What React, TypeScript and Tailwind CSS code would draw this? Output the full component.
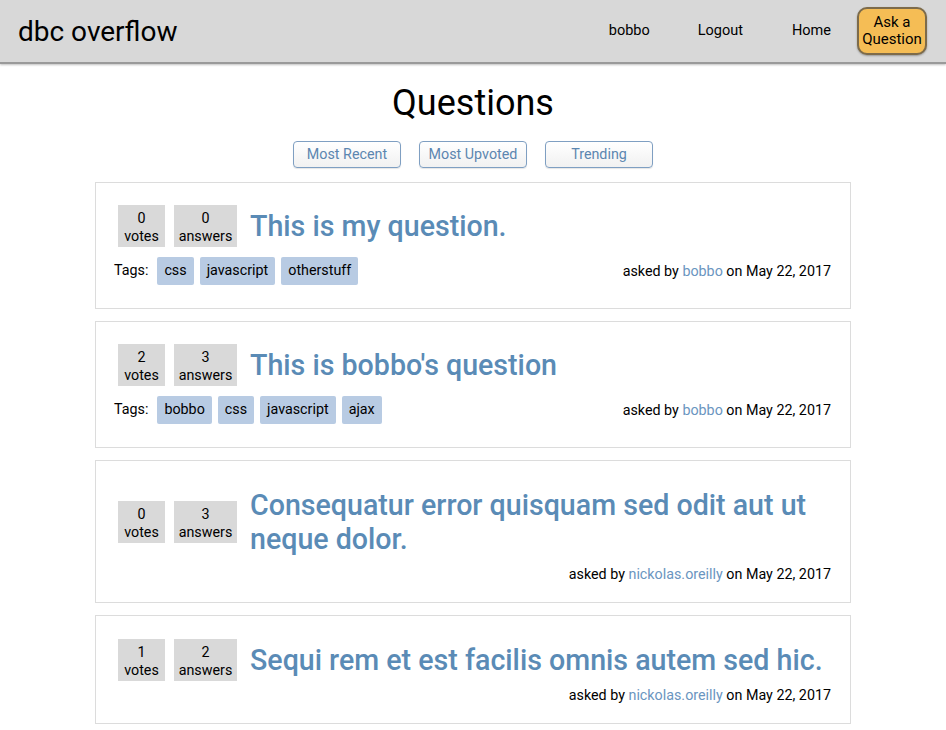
import React from "react";

type Question = {
  votes: number;
  answers: number;
  title: string;
  tags: string[];
  author: string;
  date: string;
};

const questions: Question[] = [
  {
    votes: 0,
    answers: 0,
    title: "This is my question.",
    tags: ["css", "javascript", "otherstuff"],
    author: "bobbo",
    date: "May 22, 2017",
  },
  {
    votes: 2,
    answers: 3,
    title: "This is bobbo's question",
    tags: ["bobbo", "css", "javascript", "ajax"],
    author: "bobbo",
    date: "May 22, 2017",
  },
  {
    votes: 0,
    answers: 3,
    title: "Consequatur error quisquam sed odit aut ut neque dolor.",
    tags: [],
    author: "nickolas.oreilly",
    date: "May 22, 2017",
  },
  {
    votes: 1,
    answers: 2,
    title: "Sequi rem et est facilis omnis autem sed hic.",
    tags: [],
    author: "nickolas.oreilly",
    date: "May 22, 2017",
  },
];

function Header() {
  return (
    <header className="flex h-[64px] items-center justify-between border-b-2 border-[#9a9a9a] bg-[#d8d8d8] pl-[18px] pr-[19px] shadow-[0_1px_2px_rgba(0,0,0,0.25)]">
      <h1 className="mt-[2px] text-[28px] leading-none text-black">dbc overflow</h1>
      <nav className="flex items-center text-[14.5px] text-black">
        <a className="mr-[48px]">bobbo</a>
        <a className="mr-[49px]">Logout</a>
        <a className="mr-[26px]">Home</a>
        <button className="flex h-[48px] w-[70px] flex-col items-center justify-center rounded-[10px] border-2 border-[#7d6b4a] bg-[#f5bd55] text-[15px] leading-[17px] text-black shadow-[0_1px_2px_rgba(0,0,0,0.3)]">
          <span>Ask a</span>
          <span>Question</span>
        </button>
      </nav>
    </header>
  );
}

function SortButton({ label }: { label: string }) {
  return (
    <button className="h-[27px] w-[108px] rounded-[4px] border border-[#7f9fc2] bg-gradient-to-b from-white to-[#f1f1f1] text-[14.3px] text-[#5c86b0] shadow-[0_1px_1px_rgba(0,0,0,0.1)]">
      {label}
    </button>
  );
}

function CountBox({ n, label, wide }: { n: number; label: string; wide?: boolean }) {
  return (
    <div
      className={
        wide
          ? "flex h-[42px] w-[63px] shrink-0 flex-col items-center justify-center bg-[#d9d9d9] pt-[2px] text-[14.3px] leading-[18px] text-black"
          : "flex h-[42px] w-[47px] shrink-0 flex-col items-center justify-center bg-[#d9d9d9] pt-[2px] text-[14.3px] leading-[18px] text-black"
      }
    >
      <span>{n}</span>
      <span>{label}</span>
    </div>
  );
}

function AskedBy({ q }: { q: Question }) {
  return (
    <p className="text-[14.3px] leading-[18px] text-black">
      asked by <a className="text-[#6a95c0]">{q.author}</a> on {q.date}
    </p>
  );
}

function QuestionCard({ q }: { q: Question }) {
  const hasTags = q.tags.length > 0;
  return (
    <article
      className={
        hasTags
          ? "border border-[#dcdcdc] bg-white pb-[23px] pl-[18px] pr-[19px] pt-[22px]"
          : "border border-[#dcdcdc] bg-white pb-[19px] pl-[18px] pr-[19px] pt-[23px]"
      }
    >
      <div className="flex items-center">
        <div className="ml-[4px] flex gap-[9px]">
          <CountBox n={q.votes} label="votes" />
          <CountBox n={q.answers} label="answers" wide />
        </div>
        <h2 className="my-[4px] ml-[13px] text-[28.6px] font-medium leading-[34px] text-[#5a8bb6]">
          {q.title}
        </h2>
      </div>
      {hasTags ? (
        <div className="mt-[10px] flex items-center justify-between">
          <div className="flex items-center text-[14.3px] text-black">
            <span className="mr-[9px]">Tags:</span>
            <div className="flex gap-[6px]">
              {q.tags.map((t) => (
                <span
                  key={t}
                  className="flex h-[28px] items-center rounded-[2px] bg-[#b8cbe3] px-[7px]"
                >
                  {t}
                </span>
              ))}
            </div>
          </div>
          <AskedBy q={q} />
        </div>
      ) : (
        <div className="mt-[5px] flex justify-end">
          <AskedBy q={q} />
        </div>
      )}
    </article>
  );
}

export default function App() {
  return (
    <div className="min-h-[730px] bg-white font-['Roboto',sans-serif]">
      <Header />
      <main className="mx-auto w-[756px] pb-6">
        <h1 className="mt-[17px] text-center text-[36px] leading-[44px] text-black">
          Questions
        </h1>
        <div className="mt-[16px] flex justify-center gap-[18px]">
          <SortButton label="Most Recent" />
          <SortButton label="Most Upvoted" />
          <SortButton label="Trending" />
        </div>
        <div className="mt-[14px] flex flex-col gap-[12px]">
          {questions.map((q) => (
            <QuestionCard key={q.title} q={q} />
          ))}
        </div>
      </main>
    </div>
  );
}
